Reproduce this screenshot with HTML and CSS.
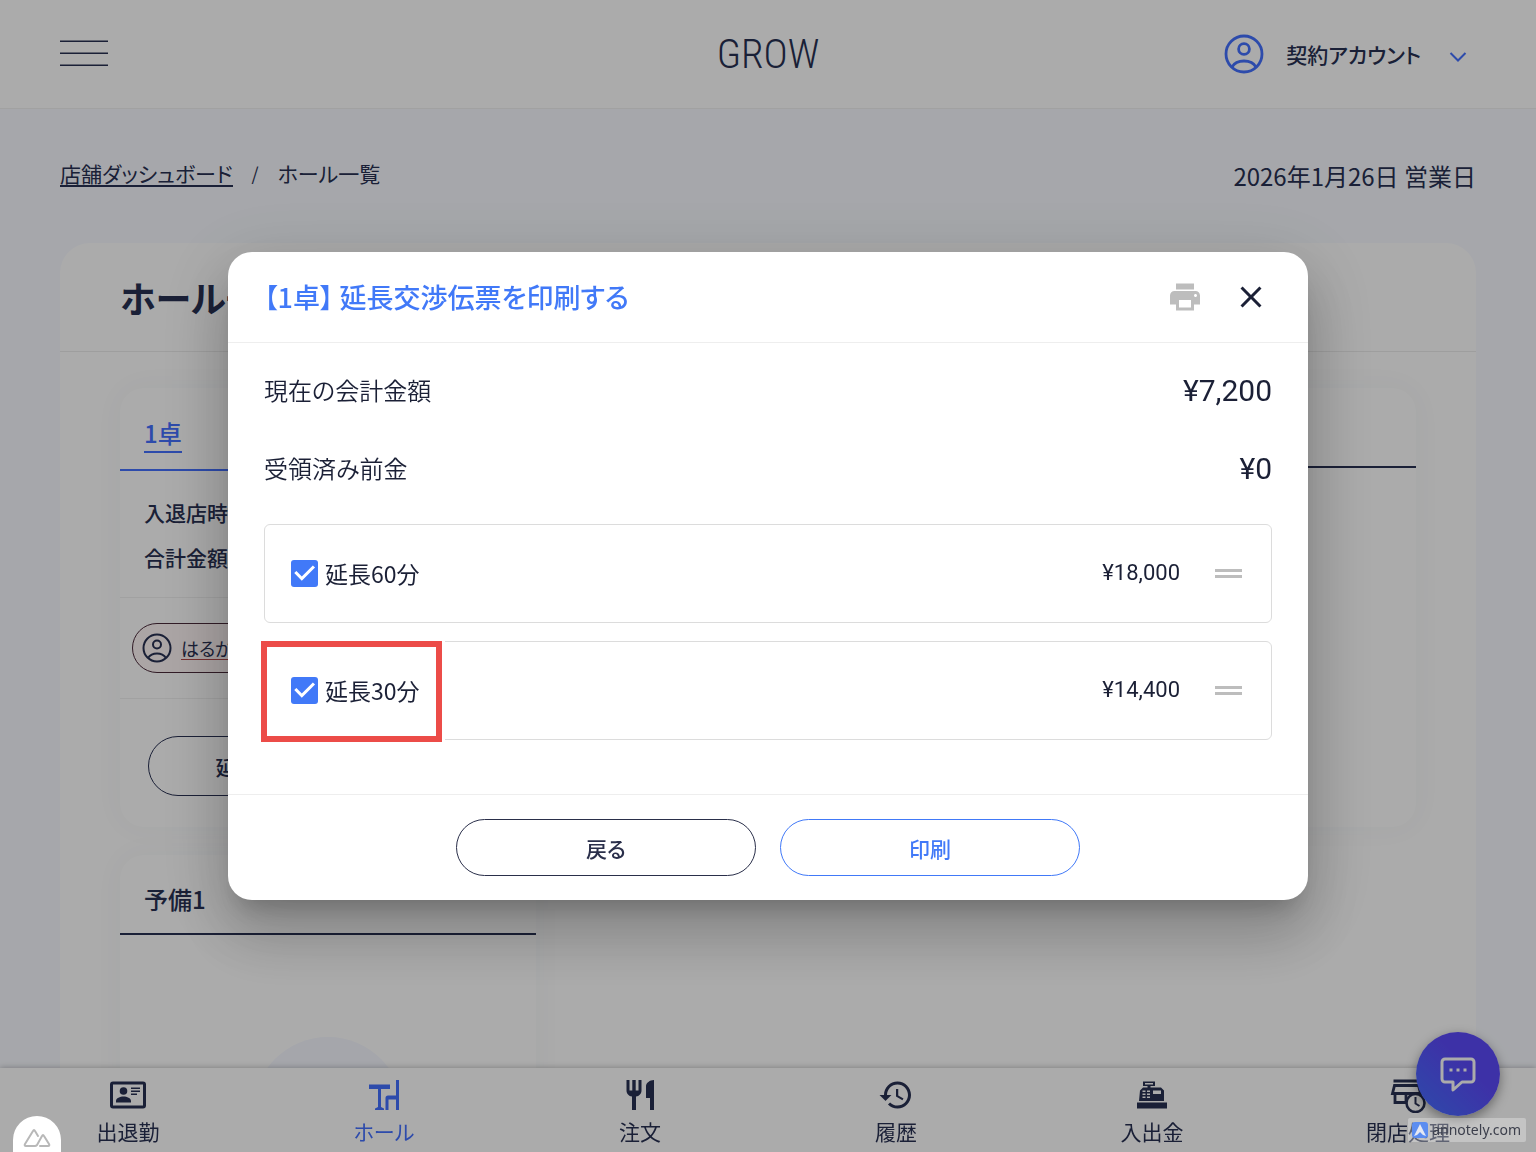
FILE: index.html
```html
<!DOCTYPE html>
<html lang="ja">
<head>
<meta charset="utf-8">
<meta name="viewport" content="width=device-width, initial-scale=1">
<title>GROW</title>
<link rel="stylesheet" href="styles.css">
</head>
<body>
<header class="topbar">
  <button class="menu-button" type="button" aria-label="メニュー">
    <svg width="48" height="30" viewBox="0 0 48 30" stroke="currentColor" stroke-width="1.5"><path d="M0 2.200h48M0 14.200h48M0 26.200h48"/></svg>
  </button>
  <a class="brand" href="#">GROW</a>
  <button class="account" type="button">
    <svg class="account-icon" width="40" height="40" viewBox="0 0 40 40" fill="none" stroke="currentColor" stroke-width="2.8"><circle cx="20" cy="20" r="18"/><circle cx="20" cy="15" r="5.4"/><path d="M8 33c2-3.600 6.600-6 12-6s10 2.400 12 6"/></svg>
    <span>契約アカウント</span>
    <svg class="account-arrow" width="18" height="12" viewBox="0 0 18 12" fill="none" stroke="currentColor" stroke-width="2"><path d="M1.500 2l7.500 7.500 7.500-7.500"/></svg>
  </button>
</header>

<main class="page">
  <div class="page-head">
    <nav class="breadcrumb" aria-label="パンくず">
      <a href="#">店舗ダッシュボード</a><span class="slash">/</span><span>ホール一覧</span>
    </nav>
    <p class="business-day">2026年1月26日 営業日</p>
  </div>

  <section class="panel">
    <h1 class="panel-title">ホール一覧</h1>
    <div class="tables">
      <article class="seat">
        <h2 class="seat-head seat-head-active"><a href="#">1卓</a></h2>
        <div class="seat-info"><p>入退店時間</p><p>合計金額</p></div>
        <div class="seat-cast">
          <a class="cast" href="#">
            <svg width="30" height="30" viewBox="0 0 30 30" fill="none" stroke="currentColor" stroke-width="2"><circle cx="15" cy="15" r="13.500"/><circle cx="15" cy="11.500" r="4"/><path d="M6 25c2-3 5-4.500 9-4.500s7 1.500 9 4.500"/></svg>
            <span>はるか</span>
          </a>
        </div>
        <div class="seat-actions"><button class="pill seat-button" type="button">延長交渉伝票を印刷する</button></div>
      </article>
      <article class="seat seat-right"><h2 class="seat-head">&nbsp;</h2></article>
      <article class="seat">
        <h2 class="seat-head">予備1</h2>
        <div class="seat-empty"><span class="seat-circle"></span></div>
      </article>
    </div>
  </section>
</main>

<nav class="tabs">
  <a class="tab" href="#">
    <svg width="36" height="36" viewBox="0 0 36 36" fill="currentColor"><path fill-rule="evenodd" d="M3 4.500h30a3 3 0 0 1 3 3v21a3 3 0 0 1-3 3H3a3 3 0 0 1-3-3v-21a3 3 0 0 1 3-3zm0 3v21h30v-21z"/><circle cx="13.500" cy="14" r="3.800"/><path d="M6 25.500v-1.500c0-3 4-4.500 7.500-4.500s7.500 1.500 7.500 4.500v1.500zM21 10.500h9v1.500h-9zM21 13.500h9V15h-9zM21 16.500h6V18h-6z"/></svg>
    <span>出退勤</span>
  </a>
  <a class="tab tab-active" href="#">
    <svg width="36" height="36" viewBox="0 0 36 36" fill="currentColor"><path d="M3 7.500h21V12h-9v18l3 1.500V33H9v-1.500l3-1.500V12H3zM30 3h3v30h-3V22.500h-7.500V33h-3V21q0-2.500 2.500-2.500h8z"/></svg>
    <span>ホール</span>
  </a>
  <a class="tab" href="#">
    <svg width="36" height="36" viewBox="0 0 36 36" fill="currentColor"><path d="M4.500 3h3v10.500h2.800V3h3.400v10.500h2.800V3h3v10.500c0 3.180-2.300 5.760-5.500 5.960V33h-4V19.460c-3.200-.2-5.500-2.780-5.500-5.960zM24 9v12h4v12h4V3c-4.140 0-8 3-8 6z"/></svg>
    <span>注文</span>
  </a>
  <a class="tab" href="#">
    <svg width="36" height="36" viewBox="0 0 24 24" fill="currentColor"><path d="M13 3c-4.970 0-9 4.030-9 9H1l3.890 3.890.07.14L9 12H6c0-3.870 3.130-7 7-7s7 3.130 7 7-3.130 7-7 7c-1.930 0-3.680-.79-4.940-2.060l-1.420 1.420C8.270 19.990 10.510 21 13 21c4.970 0 9-4.030 9-9s-4.030-9-9-9zm-1 5v5l4.280 2.540.72-1.210-3.500-2.080V8z"/></svg>
    <span>履歴</span>
  </a>
  <a class="tab" href="#">
    <svg width="36" height="36" viewBox="0 0 36 36" fill="currentColor"><path fill-rule="evenodd" d="M9 4.500h12v4.500h-4.500v1.500h10.500l3 3v10.500H5l1-10.500 3-3h4.500V9H9zm2 1.500v1.500h8V6zM8.500 13.500V15h3v-1.500zm4.500 0V15h3v-1.500zM8.500 16.500V18h3v-1.500zm4.500 0V18h3v-1.500zM8.500 19.500V21h3v-1.500zm4.500 0V21h3v-1.500zM19 13.500V17h8v-3.500zM3 25.500h30v6H3z"/></svg>
    <span>入出金</span>
  </a>
  <a class="tab" href="#">
    <svg width="36" height="36" viewBox="0 0 36 36" fill="none" stroke="currentColor" stroke-width="2.800"><path d="M3.500 4h26M4.500 8.500h24l2 8h-28zM5 17v8.500h11.500M16 17v8"/><circle cx="25.500" cy="26" r="9" stroke-width="2.600"/><path d="M25.500 20v6.500l4 2.500" stroke-width="2"/></svg>
    <span>閉店処理</span>
  </a>
</nav>

<button class="chat" type="button" aria-label="チャット">
  <svg width="42" height="42" viewBox="0 0 42 42" fill="none" stroke="currentColor" stroke-width="3" stroke-linejoin="round"><path d="M8 6h26a3 3 0 0 1 3 3v17a3 3 0 0 1-3 3h-9l-9 8v-8H8a3 3 0 0 1-3-3V9a3 3 0 0 1 3-3z"/><path d="M12.500 17h3M19.500 17h3M26.500 17h3"/></svg>
</button>

<div class="overlay">
  <section class="dialog" role="dialog" aria-modal="true" aria-labelledby="dialog-title">
    <header class="dialog-head">
      <h2 class="dialog-title" id="dialog-title">【1卓】 延長交渉伝票を印刷する</h2>
      <button class="icon-button icon-muted" type="button" aria-label="印刷">
        <svg width="36" height="36" viewBox="0 0 24 24" fill="currentColor"><path d="M19 8H5c-1.660 0-3 1.340-3 3v6h4v4h12v-4h4v-6c0-1.660-1.340-3-3-3zm-3 11H8v-5h8v5zm3-7c-.55 0-1-.45-1-1s.45-1 1-1 1 .45 1 1-.45 1-1 1zm-1-9H6v4h12V3z"/></svg>
      </button>
      <button class="icon-button" type="button" aria-label="閉じる">
        <svg width="36" height="36" viewBox="0 0 24 24" fill="currentColor"><path d="M19 6.410L17.590 5 12 10.590 6.410 5 5 6.410 10.590 12 5 17.590 6.410 19 12 13.410 17.590 19 19 17.590 13.410 12z"/></svg>
      </button>
    </header>
    <div class="dialog-body">
      <dl class="amounts">
        <div class="amount"><dt>現在の会計金額</dt><dd>¥7,200</dd></div>
        <div class="amount"><dt>受領済み前金</dt><dd>¥0</dd></div>
      </dl>
      <ul class="options">
        <li class="option">
          <input class="check" type="checkbox" id="extend-60" checked>
          <label for="extend-60">延長60分</label>
          <span class="price">¥18,000</span>
          <span class="handle"></span>
        </li>
        <li class="option option-marked">
          <input class="check" type="checkbox" id="extend-30" checked>
          <label for="extend-30">延長30分</label>
          <span class="price">¥14,400</span>
          <span class="handle"></span>
        </li>
      </ul>
    </div>
    <footer class="dialog-foot">
      <button class="pill pill-back" type="button">戻る</button>
      <button class="pill pill-primary" type="button">印刷</button>
    </footer>
  </section>
</div>

<button class="devtools" type="button" aria-label="Nuxt DevTools">
  <svg width="28" height="20" viewBox="0 0 28 20" fill="none" stroke="currentColor" stroke-width="2" stroke-linejoin="round" stroke-linecap="round"><path d="M12 18H3q-2 0-1-2L10 3q1-2 2 0l3 5M12 18q1 0 2-1l5-9q1-2 2 0l5 8q1 2-1 2h-8"/></svg>
</button>
<a class="annotely" href="#">
  <svg width="16" height="16" viewBox="0 0 16 16"><rect width="16" height="16" rx="3" fill="#5c8df0"/><path d="M8 2l6 12-3-1-3-3-3 3-3 1z" fill="#e4e8f4"/></svg>
  <span>annotely.com</span>
</a>
</body>
</html>
```
FILE: styles.css
```css
:root {
  --ink: #1b2036;
  --page-ink: #283052;
  --blue: #4179f8;
  --page-blue: #4470ff;
  --line: #dcdcdc;
}

* { box-sizing: border-box; }

body {
  margin: 0;
  height: 100vh;
  overflow: hidden;
  background: #f8faff;
  color: var(--page-ink);
  font-family: "Noto Sans CJK JP", sans-serif;
  font-size: 21px;
  line-height: 30px;
  font-feature-settings: "palt";
}

h1, h2, p, dl, dd, ul { margin: 0; padding: 0; }
ul { list-style: none; }
a { color: inherit; text-decoration: none; }
svg { display: block; flex: none; }

button {
  padding: 0;
  border: 0;
  background: none;
  color: inherit;
  font: inherit;
  font-feature-settings: inherit;
}

/* Top bar */
.topbar {
  display: grid;
  grid-template-columns: 1fr auto 1fr;
  align-items: center;
  height: 109px;
  padding: 0 69px 0 60px;
  border-bottom: 1px solid #f0f0f0;
  background: #fff;
}
.menu-button { justify-self: start; }
.brand {
  padding-left: 9px;
  font-family: "Roboto Condensed", "Liberation Sans Narrow", Roboto, sans-serif;
  font-size: 41px;
  font-weight: 300;
  line-height: 58px;
}
.account {
  display: flex;
  align-items: center;
  justify-self: end;
  font-weight: 500;
}
.account-icon { margin-right: 22px; color: var(--page-blue); }
.account-arrow { margin: 6px 0 0 28px; color: var(--page-blue); }

/* Page */
.page { padding: 0 60px; }
.page-head {
  display: flex;
  align-items: center;
  justify-content: space-between;
  height: 134px;
}
.breadcrumb { display: flex; gap: 19px; padding-bottom: 6px; }
.breadcrumb a { border-bottom: 2px solid; line-height: 24px; margin: 3px 0 1px; }
.slash { font-size: 18px; }
.business-day { font-size: 24px; line-height: 36px; }

.panel {
  border-radius: 30px;
  background: #fff;
}
.panel-title {
  padding: 27px 60px;
  border-bottom: 1px solid #ececec;
  font-size: 36px;
  font-weight: 700;
  line-height: 54px;
}
.tables {
  display: grid;
  grid-template-columns: repeat(3, 1fr);
  gap: 28px 24px;
  padding: 36px 60px 0;
}

/* Seat cards */
.seat {
  border-radius: 24px;
  background: #fff;
  box-shadow: 0 0 30px rgba(60, 80, 120, 0.04);
}
.seat-right { grid-column: 3; }
.seat-head {
  padding: 26px 24px 16px;
  border-bottom: 2px solid;
  font-size: 24px;
  font-weight: 500;
  line-height: 36px;
}
.seat-head-active { padding-top: 27px; color: var(--page-blue); }
.seat-head-active a { display: inline-block; border-bottom: 2px solid; }
.seat-info {
  padding: 19px 24px 17px;
  border-bottom: 1px solid #f0f0f0;
  font-weight: 500;
  line-height: 45px;
}
.seat-cast {
  padding: 25px 12px;
  border-bottom: 1px solid #f0f0f0;
}
.cast {
  display: flex;
  align-items: center;
  gap: 9px;
  height: 50px;
  padding: 0 9px;
  border: 1px solid #4a2a3a;
  border-radius: 25px;
  background: #fff6f6;
  font-size: 18px;
}
.cast span { text-decoration: underline; text-decoration-color: #b04848; text-underline-offset: 3px; }
.seat-actions { padding: 37px 28px 31px; }
.seat-empty {
  display: flex;
  justify-content: center;
  padding-top: 102px;
}
.seat-circle { width: 150px; height: 150px; border-radius: 50%; background: #f6f8ff; }

.pill {
  width: 300px;
  height: 57px;
  border: 1px solid currentColor;
  border-radius: 30px;
  font-weight: 500;
}
.pill-back { color: #2a2f4a; }
.pill-primary { color: var(--blue); }
.seat-button { width: 100%; height: 60px; }

/* Bottom tabs */
.tabs {
  position: fixed;
  inset: auto 0 0;
  display: grid;
  grid-template-columns: repeat(6, 1fr);
  height: 84px;
  background: #fff;
  box-shadow: 0 0 6px rgba(0, 0, 0, 0.3);
}
.tab {
  display: flex;
  flex-direction: column;
  align-items: center;
  gap: 3px;
  padding-top: 9px;
}
.tab-active { color: var(--page-blue); }

.chat {
  position: fixed;
  right: 36px;
  bottom: 36px;
  display: grid;
  place-items: center;
  width: 84px;
  height: 84px;
  border-radius: 50%;
  background: linear-gradient(45deg, #4470ff, #5c4afa 60%);
  box-shadow: 0 4px 12px rgba(0, 0, 0, 0.4);
  color: #fff;
}

/* Dialog */
.overlay {
  position: fixed;
  inset: 0;
  display: grid;
  place-items: center;
  background: rgba(0, 0, 0, 0.33);
}
.dialog {
  width: 1080px;
  max-width: 100%;
  border-radius: 24px;
  background: #fff;
  color: var(--ink);
  box-shadow:
    0 17px 23px -11px rgba(0, 0, 0, 0.2),
    0 36px 57px 5px rgba(0, 0, 0, 0.14),
    0 14px 69px 12px rgba(0, 0, 0, 0.12);
}
.dialog-head {
  display: flex;
  align-items: center;
  gap: 30px;
  padding: 27px 39px 27px 36px;
  border-bottom: 1px solid #eee;
}
.dialog-title {
  flex: 1;
  color: var(--blue);
  font-size: 27px;
  font-weight: 500;
  line-height: 36px;
}
.icon-muted { color: #bdbdbd; }
.dialog-body { padding: 9px 36px 54px; }
.amount {
  display: flex;
  align-items: center;
  justify-content: space-between;
  height: 78px;
  font-size: 24px;
}
.amount dt { padding-bottom: 2px; font-weight: 350; }
.amount dd { font-family: Roboto, sans-serif; font-size: 30px; }
.options {
  display: grid;
  gap: 18px;
  padding-top: 16px;
}
.option {
  display: flex;
  align-items: center;
  height: 99px;
  padding: 0 29px 0 26px;
  border: 1px solid var(--line);
  border-radius: 6px;
}
.check {
  appearance: none;
  width: 27px;
  height: 27px;
  margin: 0 7px 0 0;
  border-radius: 3px;
  background: var(--blue);
}
.check::before {
  content: "";
  display: block;
  height: 100%;
  background: #fff;
  clip-path: polygon(12% 48%, 20% 41%, 40% 61%, 81% 20%, 89% 28%, 40% 77%);
}
.option label { flex: 1; padding-bottom: 2px; font-size: 23px; }
.price { padding-bottom: 2px; font-family: Roboto, sans-serif; font-size: 22px; }
.handle {
  width: 27px;
  height: 9px;
  margin-left: 35px;
  border: solid #bdbdbd;
  border-width: 3px 0;
}
.option-marked { position: relative; }
.option-marked::after {
  content: "";
  position: absolute;
  box-sizing: border-box;
  top: -1px;
  left: -4px;
  width: 181px;
  height: 101px;
  border: 6px solid #ec4c48;
  box-shadow: 3px 0 0 #fff;
  pointer-events: none;
}
.dialog-foot {
  display: flex;
  justify-content: center;
  gap: 24px;
  padding: 24px;
  border-top: 1px solid #eee;
}

/* Page badges */
.devtools {
  position: fixed;
  left: 13px;
  bottom: 0;
  width: 48px;
  height: 36px;
  padding: 7px 10px 0;
  border-radius: 24px 24px 0 0;
  background: #fff;
  color: #b8b8b8;
}
.annotely {
  position: fixed;
  right: 10px;
  bottom: 10px;
  display: flex;
  align-items: center;
  gap: 4px;
  height: 24px;
  padding: 0 5px 0 4px;
  border-radius: 2px;
  background: rgba(255, 255, 255, 0.3);
  color: #3c3f4c;
  font-family: "Noto Sans", sans-serif;
  font-size: 14px;
}
```
